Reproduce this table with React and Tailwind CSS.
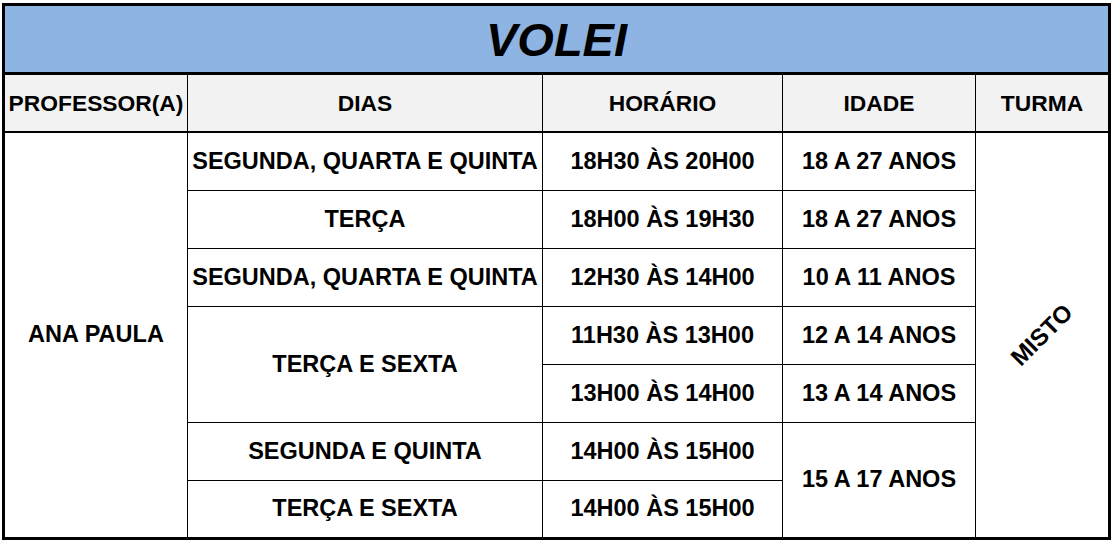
const font = { fontFamily: '"Liberation Sans", Arial, sans-serif' };

const cell = 'bg-white flex items-center justify-center text-center whitespace-nowrap';

const horarios = [
  '18H30 ÀS 20H00',
  '18H00 ÀS 19H30',
  '12H30 ÀS 14H00',
  '11H30 ÀS 13H00',
  '13H00 ÀS 14H00',
  '14H00 ÀS 15H00',
  '14H00 ÀS 15H00',
];

const idades = ['18 A 27 ANOS', '18 A 27 ANOS', '10 A 11 ANOS', '12 A 14 ANOS', '13 A 14 ANOS'];

const App = () => {
  return (
    <div className="w-[1114px] h-[542px] bg-white pl-[2px] pt-[3px] text-black" style={font}>
      <div className="w-[1109px] border-[3px] border-black">
        <div className="h-[69px] bg-[#8db4e2] border-b-[3px] border-black flex items-center justify-center">
          <span className="text-[47px] font-bold italic leading-none">VOLEI</span>
        </div>

        <div className="grid grid-cols-[182px_354px_239px_192px_132px] gap-px bg-black border-b-2 border-black h-[58px] text-[22.8px] font-bold">
          <div className={`${cell} !bg-[#f2f2f2]`}>PROFESSOR(A)</div>
          <div className={`${cell} !bg-[#f2f2f2]`}>DIAS</div>
          <div className={`${cell} !bg-[#f2f2f2]`}>HORÁRIO</div>
          <div className={`${cell} !bg-[#f2f2f2]`}>IDADE</div>
          <div className={`${cell} !bg-[#f2f2f2]`}>TURMA</div>
        </div>

        <div className="grid grid-cols-[182px_354px_239px_192px_132px] grid-rows-[57px_57px_57px_57px_57px_57px_56px] gap-px bg-black text-[23.5px] font-bold">
          <div className={`${cell} col-start-1 row-start-1 row-span-7`}>ANA PAULA</div>

          <div className={`${cell} col-start-2 row-start-1`}>SEGUNDA, QUARTA E QUINTA</div>
          <div className={`${cell} col-start-2 row-start-2`}>TERÇA</div>
          <div className={`${cell} col-start-2 row-start-3`}>SEGUNDA, QUARTA E QUINTA</div>
          <div className={`${cell} col-start-2 row-start-4 row-span-2`}>TERÇA E SEXTA</div>
          <div className={`${cell} col-start-2 row-start-6`}>SEGUNDA E QUINTA</div>
          <div className={`${cell} col-start-2 row-start-7`}>TERÇA E SEXTA</div>

          {horarios.map((h, i) => (
            <div key={i} className={`${cell} col-start-3`} style={{ gridRowStart: i + 1 }}>
              {h}
            </div>
          ))}

          {idades.map((a, i) => (
            <div key={i} className={`${cell} col-start-4`} style={{ gridRowStart: i + 1 }}>
              {a}
            </div>
          ))}
          <div className={`${cell} col-start-4 row-start-6 row-span-2`}>15 A 17 ANOS</div>

          <div className={`${cell} col-start-5 row-start-1 row-span-7`}>
            <span className="text-[24px] -rotate-45 inline-block">MISTO</span>
          </div>
        </div>
      </div>
    </div>
  );
};

export default App;
